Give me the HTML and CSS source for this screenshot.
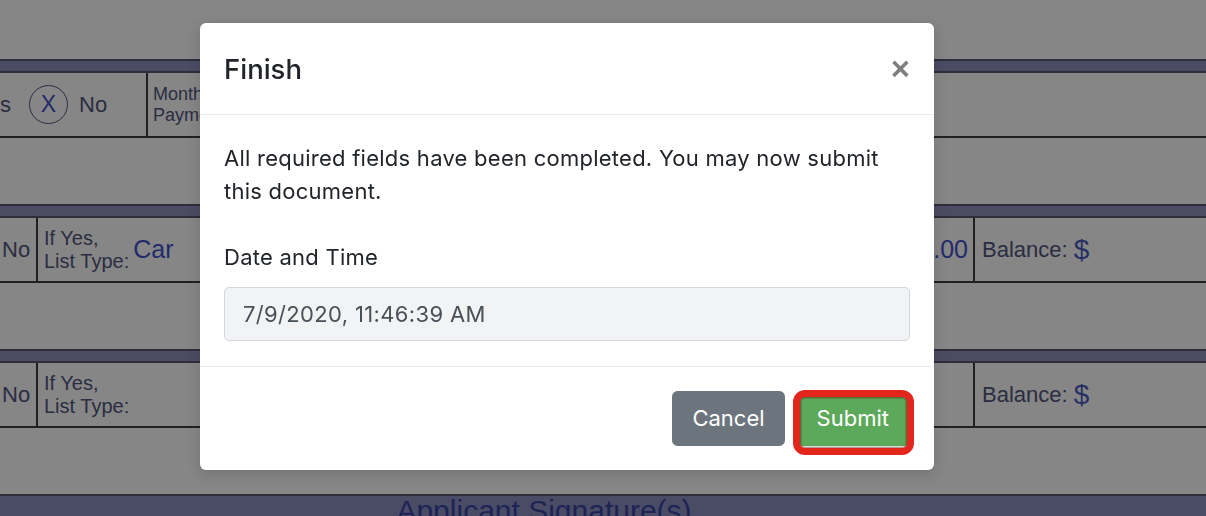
FILE: index.html
```html
<!DOCTYPE html>
<html lang="en">
<head>
    <meta charset="UTF-8">
    <meta name="viewport" content="width=device-width, initial-scale=1.0">
    <title>Finish</title>
    <link rel="stylesheet" href="styles.css">
</head>
<body>
    <div class="sheet">
        <div class="band"></div>
        <div class="row">
            <div class="cell cell-yesno">
                <span>s</span>
                <span class="circled">X</span>
                <span>No</span>
            </div>
            <div class="cell cell-label">Monthly<br>Payment:</div>
        </div>
        <div class="row row-blank"></div>

        <div class="band"></div>
        <div class="row">
            <div class="cell cell-no">No</div>
            <div class="cell cell-type">
                <span class="small-label">If Yes,<br>List Type:</span>
                <span class="value">Car</span>
            </div>
            <div class="cell cell-amount"><span class="value">8,500.00</span></div>
            <div class="cell cell-balance">Balance:<span class="dollar">$</span></div>
        </div>
        <div class="row row-blank"></div>

        <div class="band"></div>
        <div class="row">
            <div class="cell cell-no">No</div>
            <div class="cell cell-type">
                <span class="small-label">If Yes,<br>List Type:</span>
            </div>
            <div class="cell cell-amount"></div>
            <div class="cell cell-balance">Balance:<span class="dollar">$</span></div>
        </div>
        <div class="row row-blank"></div>

        <div class="sig-band">Applicant Signature(s)</div>
    </div>

    <div class="modal">
        <div class="modal-dialog">
            <div class="modal-header">
                <h5 class="modal-title">Finish</h5>
                <button type="button" class="close">&times;</button>
            </div>
            <div class="modal-body">
                <p>All required fields have been completed. You may now submit this document.</p>
                <label for="dateTime">Date and Time</label>
                <input type="text" id="dateTime" class="form-control" value="7/9/2020, 11:46:39 AM" readonly>
            </div>
            <div class="modal-footer">
                <button type="button" class="btn btn-secondary">Cancel</button>
                <button type="button" class="btn btn-success highlighted">Submit</button>
            </div>
        </div>
    </div>
</body>
</html>
```

FILE: styles.css
```css
body {
    margin: 0;
    background: #868686;
    font-family: "Liberation Sans", Arial, sans-serif;
    color: #2a2d42;
    overflow: hidden;
}

/* form sheet behind the dialog (already dimmed by the backdrop) */
.sheet {
    padding-top: 59px;
}
.band {
    height: 10px;
    background: #4b4c64;
    border-top: 2px solid #2e2e3a;
    border-bottom: 2px solid #2e2e3a;
}
.row {
    display: flex;
    height: 63px;
    border-bottom: 2px solid #1f1f24;
}
.row-blank {
    height: 66px;
    border-bottom: none;
}
.cell {
    display: flex;
    align-items: center;
    border-right: 2px solid #1f1f24;
    white-space: nowrap;
}
.cell-yesno {
    width: 146px;
    font-size: 22px;
}
.circled {
    width: 37px;
    height: 37px;
    margin: 0 11px 0 18px;
    border: 1.5px solid #2c2f45;
    border-radius: 50%;
    display: flex;
    align-items: center;
    justify-content: center;
    color: #222a6a;
    font-size: 23px;
}
.cell-label {
    flex: 1;
    padding-left: 5px;
    font-size: 18px;
    line-height: 21px;
    border-right: none;
}
.cell-no {
    width: 34px;
    padding-left: 2px;
    font-size: 22px;
}
.cell-type {
    flex: 1;
    padding-left: 6px;
}
.small-label {
    font-size: 20px;
    line-height: 23px;
}
.value {
    margin-left: 4px;
    color: #222a6a;
    font-size: 25px;
}
.cell-amount {
    width: 200px;
    padding-right: 5px;
    justify-content: flex-end;
}
.cell-balance {
    width: 231px;
    box-sizing: border-box;
    padding-left: 7px;
    font-size: 22px;
    border-right: none;
}
.dollar {
    margin-left: 6px;
    color: #263064;
    font-size: 28px;
}
.sig-band {
    height: 40px;
    padding-right: 118px;
    background: #4a4b64;
    border-top: 2px solid #2e2e3a;
    color: #1d2455;
    font-size: 30px;
    line-height: 30px;
    text-align: center;
}

/* dialog */
.modal {
    position: fixed;
    inset: 0;
}
.modal-dialog {
    width: 734px;
    margin: 23px 0 0 200px;
    background: #fff;
    border-radius: 6px;
    box-shadow: 0 4px 14px rgba(0, 0, 0, 0.15);
    font-family: Inter, "Liberation Sans", sans-serif;
    color: #212529;
}
.modal-header {
    display: flex;
    align-items: center;
    justify-content: space-between;
    height: 91px;
    padding: 0 24px;
    border-bottom: 1px solid #e9ecef;
}
.modal-title {
    margin: 0;
    font-size: 27.5px;
    font-weight: 500;
}
.close {
    padding: 0;
    border: none;
    background: none;
    font-family: "Liberation Sans", Arial, sans-serif;
    font-size: 33px;
    font-weight: 700;
    line-height: 1;
    color: #000;
    opacity: 0.5;
    cursor: pointer;
}
.modal-body {
    padding: 27px 24px 25px;
    letter-spacing: 0.25px;
}
.modal-body p {
    margin: 0 0 33px;
    font-size: 22px;
    line-height: 33px;
}
.modal-body label {
    display: block;
    margin-bottom: 13px;
    font-size: 22px;
    line-height: 33px;
}
.form-control {
    display: block;
    width: 100%;
    height: 54px;
    box-sizing: border-box;
    padding: 0 18px;
    font-family: Inter, "Liberation Sans", sans-serif;
    font-size: 22px;
    letter-spacing: 0.35px;
    color: #495057;
    background: #f1f3f5;
    border: 1px solid #d3d7dc;
    border-radius: 5px;
    outline: none;
}
.modal-footer {
    display: flex;
    justify-content: flex-end;
    gap: 11px;
    padding: 24px;
    border-top: 1px solid #e9ecef;
}
.btn {
    padding: 10px 20px;
    font-family: Inter, "Liberation Sans", sans-serif;
    font-size: 22px;
    line-height: 33px;
    color: #fff;
    border: 1px solid transparent;
    border-radius: 5.5px;
    cursor: pointer;
}
.btn-secondary {
    padding: 10px 19px;
    background: #6c757d;
    border-color: #6c757d;
}
.btn-success {
    position: relative;
    background: #5da95b;
    border-color: #5da95b;
}
/* red annotation ring around the submit button */
.highlighted::after {
    content: "";
    position: absolute;
    top: -2px;
    left: -4px;
    right: -5px;
    bottom: -10px;
    border: 7px solid #e3261b;
    border-radius: 12px;
    box-shadow: inset 0 0 2px 1px rgba(70, 30, 20, 0.6);
}
```
